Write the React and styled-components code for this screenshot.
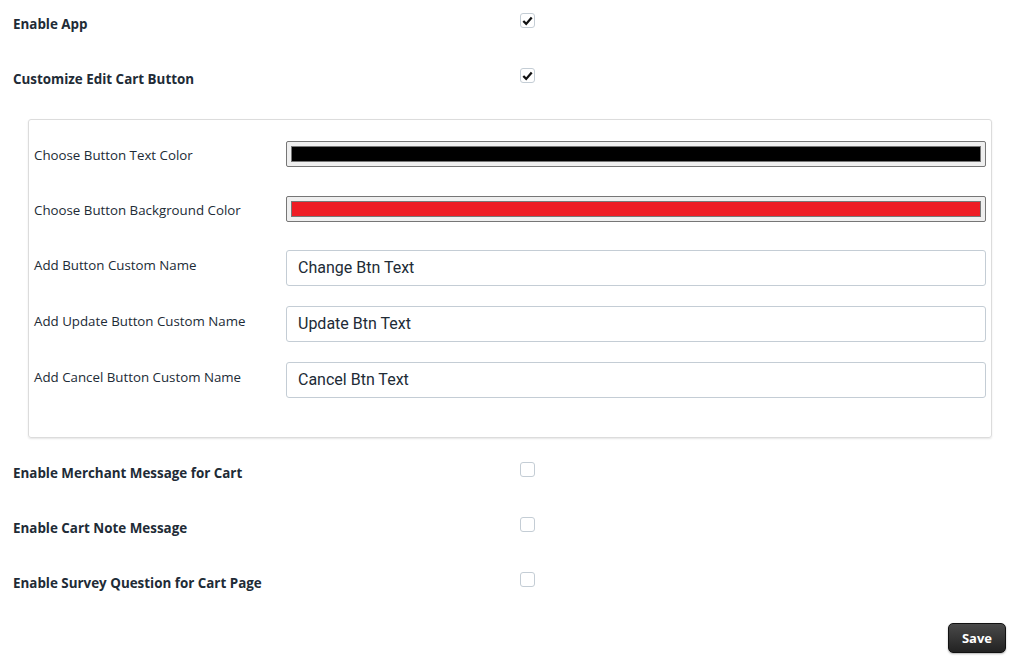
import React from 'react';
import styled, { createGlobalStyle } from 'styled-components';

const GlobalStyle = createGlobalStyle`
  body {
    margin: 0;
    background: #fff;
    font-family: "Open Sans", "Liberation Sans", sans-serif;
    color: #212b36;
  }
`;

const Page = styled.div`
  padding: 0 6px 6px 13px;
`;

const ToggleRow = styled.div`
  display: grid;
  grid-template-columns: 507px 16px;
  align-items: start;
  height: 55px;
`;

const ToggleLabel = styled.label`
  font-size: 13.4px;
  font-weight: 700;
  line-height: 18px;
  padding-top: 15px;
`;

const Check = styled.span`
  width: 15px;
  height: 15px;
  box-sizing: border-box;
  border: 1px solid #c4cdd5;
  border-radius: 3px;
  background: #fff;
  display: flex;
  align-items: center;
  justify-content: center;
  margin-top: 13px;
`;

const Card = styled.div`
  margin: 9px 14px 11px 15px;
  border: 1px solid #dcdcdc;
  border-radius: 3px;
  box-shadow: 0 1px 2px rgba(0, 0, 0, 0.1);
  padding: 21px 5px 39px 5px;
  display: flex;
  flex-direction: column;
  gap: 20px;
`;

const FieldRow = styled.div`
  display: grid;
  grid-template-columns: 252px 1fr;
  align-items: start;
  min-height: ${p => p.$h || 0}px;
`;

const FieldLabel = styled.label`
  font-size: 13.3px;
  line-height: 18px;
  color: #212b36;
  padding-top: ${p => p.$pad}px;
`;

const ColorBox = styled.div`
  height: 26px;
  box-sizing: border-box;
  border: 1px solid #767676;
  border-radius: 2px;
  background: #efefef;
  padding: 4px;
`;

const Swatch = styled.div`
  height: 100%;
  box-sizing: border-box;
  border: 1px solid #777;
  background: ${p => p.$color};
`;

const TextBox = styled.div`
  height: 36px;
  box-sizing: border-box;
  border: 1px solid #c4cdd5;
  border-radius: 3px;
  padding: 6px 11px 0;
  overflow: hidden;
  font-family: Roboto, "Liberation Sans", sans-serif;
  font-size: 16px;
  line-height: 22px;
  color: #212b36;
  white-space: nowrap;
`;

const Clip = styled.div`
  height: ${p => (p.$clip ? '15.5px' : 'auto')};
  overflow: hidden;
`;

const Footer = styled.div`
  display: flex;
  justify-content: flex-end;
  margin-top: 9px;
`;

const SaveButton = styled.button`
  width: 58px;
  height: 30px;
  border: 1px solid #111;
  border-radius: 5px;
  background: linear-gradient(#4a4a4a, #222);
  color: #fff;
  font-family: "Open Sans", "Liberation Sans", sans-serif;
  font-size: 13px;
  font-weight: 700;
  box-shadow: 0 1px 2px rgba(0, 0, 0, 0.3);
`;

const Tick = () => (
  <svg width="11" height="10" viewBox="0 0 11 10">
    <path d="M1.3 5 L4.2 7.9 L9.7 1.6" fill="none" stroke="#111" strokeWidth="2.3" />
  </svg>
);

const toggles = [
  { label: 'Enable Merchant Message for Cart' },
  { label: 'Enable Cart Note Message' },
  { label: 'Enable Survey Question for Cart Page' },
];

const colors = [
  { label: 'Choose Button Text Color', color: '#000', h: 35 },
  { label: 'Choose Button Background Color', color: '#ee1c24', h: 34 },
];

const names = [
  { label: 'Add Button Custom Name', value: 'Change Btn Text' },
  { label: 'Add Update Button Custom Name', value: 'Update Btn Text' },
  { label: 'Add Cancel Button Custom Name', value: 'Cancel Btn Text', clip: true },
];

const App = () => {
  return (
    <Page>
      <GlobalStyle />
      <ToggleRow>
        <ToggleLabel>Enable App</ToggleLabel>
        <Check><Tick /></Check>
      </ToggleRow>
      <ToggleRow>
        <ToggleLabel>Customize Edit Cart Button</ToggleLabel>
        <Check><Tick /></Check>
      </ToggleRow>

      <Card>
        {colors.map(c => (
          <FieldRow key={c.label} $h={c.h}>
            <FieldLabel $pad={5}>{c.label}</FieldLabel>
            <ColorBox><Swatch $color={c.color} /></ColorBox>
          </FieldRow>
        ))}
        {names.map(n => (
          <FieldRow key={n.label}>
            <FieldLabel $pad={6}>{n.label}</FieldLabel>
            <TextBox><Clip $clip={n.clip}>{n.value}</Clip></TextBox>
          </FieldRow>
        ))}
      </Card>

      {toggles.map(t => (
        <ToggleRow key={t.label}>
          <ToggleLabel>{t.label}</ToggleLabel>
          <Check />
        </ToggleRow>
      ))}

      <Footer>
        <SaveButton>Save</SaveButton>
      </Footer>
    </Page>
  );
};

export default App;
